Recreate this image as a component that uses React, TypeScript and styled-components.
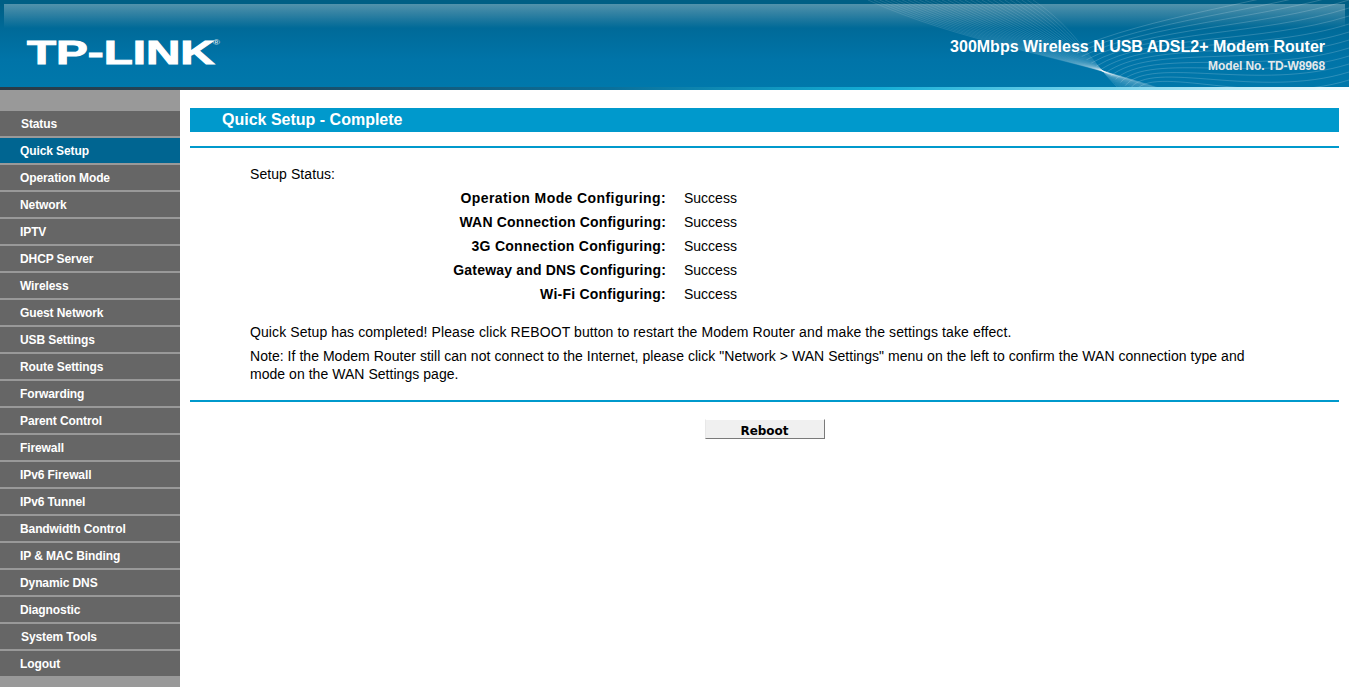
import * as React from 'react'
import styled, { createGlobalStyle } from 'styled-components'

const menuItems = [
  'Status',
  'Quick Setup',
  'Operation Mode',
  'Network',
  'IPTV',
  'DHCP Server',
  'Wireless',
  'Guest Network',
  'USB Settings',
  'Route Settings',
  'Forwarding',
  'Parent Control',
  'Firewall',
  'IPv6 Firewall',
  'IPv6 Tunnel',
  'Bandwidth Control',
  'IP & MAC Binding',
  'Dynamic DNS',
  'Diagnostic',
  'System Tools',
  'Logout',
]

const statusRows = [
  { label: 'Operation Mode Configuring:', spacing: 0.41 },
  { label: 'WAN Connection Configuring:', spacing: 0.19 },
  { label: '3G Connection Configuring:', spacing: 0.27 },
  { label: 'Gateway and DNS Configuring:', spacing: 0.18 },
  { label: 'Wi-Fi Configuring:', spacing: 0.22 },
]

const GlobalStyle = createGlobalStyle`
  html, body {
    margin: 0;
    padding: 0;
    height: 100%;
    overflow: hidden;
    background: #fff;
    font-family: "Liberation Sans", Arial, sans-serif;
  }
`

const Page = styled.div`
  width: 1349px;
  height: 687px;
  display: flex;
  flex-direction: column;
  overflow: hidden;
`

const Header = styled.header`
  position: relative;
  height: 90px;
  flex: none;
  box-sizing: border-box;
  padding: 38px 24px 0 27px;
  display: flex;
  justify-content: space-between;
  overflow: hidden;
  background: linear-gradient(to bottom, #005f85 0, #005f85 4px, #006a98 28px, #0074a8 60px, #0078ab 87px);
`

const Gloss = styled.div`
  position: absolute;
  left: 4px;
  right: 4px;
  top: 4px;
  height: 24px;
  background: linear-gradient(to bottom, rgba(255, 255, 255, 0.32), rgba(255, 255, 255, 0));
`

const HeaderEdge = styled.div`
  position: absolute;
  left: 0;
  right: 0;
  bottom: 0;
  height: 3px;
  background: linear-gradient(to right, #2b3a45 0, #1c4a63 20%, #0a6f9a 45%, #14aed6 65%, #6fd0ea 80%, #f5fcff 100%);
`

const Waves = styled.svg`
  position: absolute;
  left: 0;
  top: 0;
`

const Logo = styled.div`
  width: 131px;
  height: 30px;
  font-size: 34px;
  line-height: 29px;
  font-weight: 700;
  color: #fff;
  white-space: nowrap;
  transform: scaleX(1.4);
  transform-origin: left top;
  -webkit-text-stroke: 1px #fff;

  sup {
    margin-left: -1.5px;
    font-size: 7px;
    line-height: 0;
    font-weight: 700;
    vertical-align: 19px;
    -webkit-text-stroke: 0;
    color: #c8dfe9;
  }
`

const Product = styled.div`
  position: relative;
  text-align: right;
  color: #fff;
  font-weight: 700;
`

const ProductName = styled.div`
  font-size: 16px;
  line-height: 18px;
`

const ModelNo = styled.div`
  margin-top: 3px;
  font-size: 12px;
  line-height: 14px;
  letter-spacing: -0.1px;
  color: #e4e9ec;
`

const Body = styled.div`
  flex: 1;
  display: flex;
  min-height: 0;
`

const Sidebar = styled.nav`
  width: 180px;
  flex: none;
  box-sizing: border-box;
  padding-top: 21px;
  background: #999;
  display: flex;
  flex-direction: column;
  gap: 2px;
`

const MenuItem = styled.a<{ $active?: boolean; $indent?: boolean }>`
  height: 25px;
  flex: none;
  box-sizing: border-box;
  padding: 1px 0 0 ${(p) => (p.$indent ? 21 : 20)}px;
  background: ${(p) => (p.$active ? '#006591' : '#666')};
  color: #fff;
  font-size: 12px;
  font-weight: 700;
  line-height: 25px;
  letter-spacing: -0.1px;
`

const Main = styled.main`
  flex: 1;
  min-width: 0;
  padding: 18px 10px 0 10px;
`

const TitleBar = styled.h1`
  margin: 0;
  height: 24px;
  padding-left: 32px;
  background: #0099cc;
  color: #fff;
  font-size: 16px;
  font-weight: 700;
  line-height: 24px;
`

const Rule = styled.div`
  height: 2px;
  background: #0099cc;
`

const TopRule = styled(Rule)`
  margin-top: 14px;
`

const Content = styled.section`
  padding: 17px 79px 17px 60px;
  color: #000;
  font-size: 14px;
`

const SetupLabel = styled.div`
  line-height: 18px;
  letter-spacing: 0.08px;
`

const StatusGrid = styled.div`
  margin-top: 3px;
  display: grid;
  grid-template-columns: 416px 1fr;
  grid-auto-rows: 24px;
  column-gap: 18px;
  line-height: 24px;
`

const StatusName = styled.div<{ $spacing: number }>`
  text-align: right;
  font-weight: 700;
  letter-spacing: ${(p) => p.$spacing}px;
`

const Paragraph = styled.p`
  margin: 0;
  line-height: 18px;
`

const Done = styled(Paragraph)`
  margin-top: 17px;
  letter-spacing: 0.095px;
`

const Note = styled(Paragraph)`
  margin-top: 6px;
  letter-spacing: 0.04px;
`

const ButtonRow = styled.div`
  display: flex;
  justify-content: center;
  padding-top: 17px;
`

const RebootButton = styled.button`
  width: 120px;
  height: 20px;
  padding: 4px 0 0;
  box-sizing: border-box;
  border: 0;
  border-top: 1px solid #fff;
  border-left: 1px solid #e8e8e8;
  border-right: 1px solid #7a7a7a;
  border-bottom: 1px solid #7a7a7a;
  background: #f0f0f0;
  color: #000;
  font-family: "DejaVu Sans", sans-serif;
  font-size: 12px;
  font-weight: 700;
  line-height: 15px;
`

const lerp = (a: number, b: number, t: number) => a + (b - a) * t

// fan of thin lines coming down from the top edge
const fanPaths = () => {
  const paths: string[] = []
  const count = 30
  for (let i = 0; i < count; i++) {
    const t = i / (count - 1)
    paths.push(
      `M${lerp(868, 1033, t)} 0 C${lerp(960, 1075, t)} ${lerp(42, 28, t)} ${lerp(1060, 1085, t)} ${lerp(55, 55, t)} ${lerp(1165, 1120, t)} 90`,
    )
  }
  return paths
}

// sweep of lines coming in from the right edge
const sweepPaths = () => {
  const paths: string[] = []
  const count = 14
  for (let i = 0; i < count; i++) {
    const t = i / (count - 1)
    const y = -24 + i * 8
    const endX = lerp(1072, 1135, t)
    const endY = lerp(50, 92, t)
    paths.push(`M1349 ${y} C1260 ${y + 28} 1150 ${lerp(16, 62, t)} ${endX} ${endY}`)
  }
  return paths
}

const Wave = () => (
  <Waves width="1349" height="90" viewBox="0 0 1349 90" fill="none" stroke="#fff">
    <g strokeOpacity="0.15" strokeWidth="0.8">
      {fanPaths().map((d, i) => (
        <path key={i} d={d} />
      ))}
    </g>
    <g strokeOpacity="0.2" strokeWidth="0.9">
      {sweepPaths().map((d, i) => (
        <path key={i} d={d} />
      ))}
    </g>
  </Waves>
)

const App: React.FC = () => {
  return (
    <Page>
      <GlobalStyle />
      <Header>
        <Gloss />
        <Wave />
        <HeaderEdge />
        <Logo>
          TP-LINK<sup>®</sup>
        </Logo>
        <Product>
          <ProductName>300Mbps Wireless N USB ADSL2+ Modem Router</ProductName>
          <ModelNo>Model No. TD-W8968</ModelNo>
        </Product>
      </Header>
      <Body>
        <Sidebar>
          {menuItems.map((item) => (
            <MenuItem
              key={item}
              $active={item === 'Quick Setup'}
              $indent={item === 'Status' || item === 'System Tools'}
            >
              {item}
            </MenuItem>
          ))}
        </Sidebar>
        <Main>
          <TitleBar>Quick Setup - Complete</TitleBar>
          <TopRule />
          <Content>
            <SetupLabel>Setup Status:</SetupLabel>
            <StatusGrid>
              {statusRows.map((row) => (
                <React.Fragment key={row.label}>
                  <StatusName $spacing={row.spacing}>{row.label}</StatusName>
                  <div>Success</div>
                </React.Fragment>
              ))}
            </StatusGrid>
            <Done>
              Quick Setup has completed! Please click REBOOT button to restart the Modem Router and make the settings take effect.
            </Done>
            <Note>
              Note: If the Modem Router still can not connect to the Internet, please click "Network &gt; WAN Settings" menu on the left to confirm the WAN connection type and mode on the WAN Settings page.
            </Note>
          </Content>
          <Rule />
          <ButtonRow>
            <RebootButton>Reboot</RebootButton>
          </ButtonRow>
        </Main>
      </Body>
    </Page>
  )
}

export default App
